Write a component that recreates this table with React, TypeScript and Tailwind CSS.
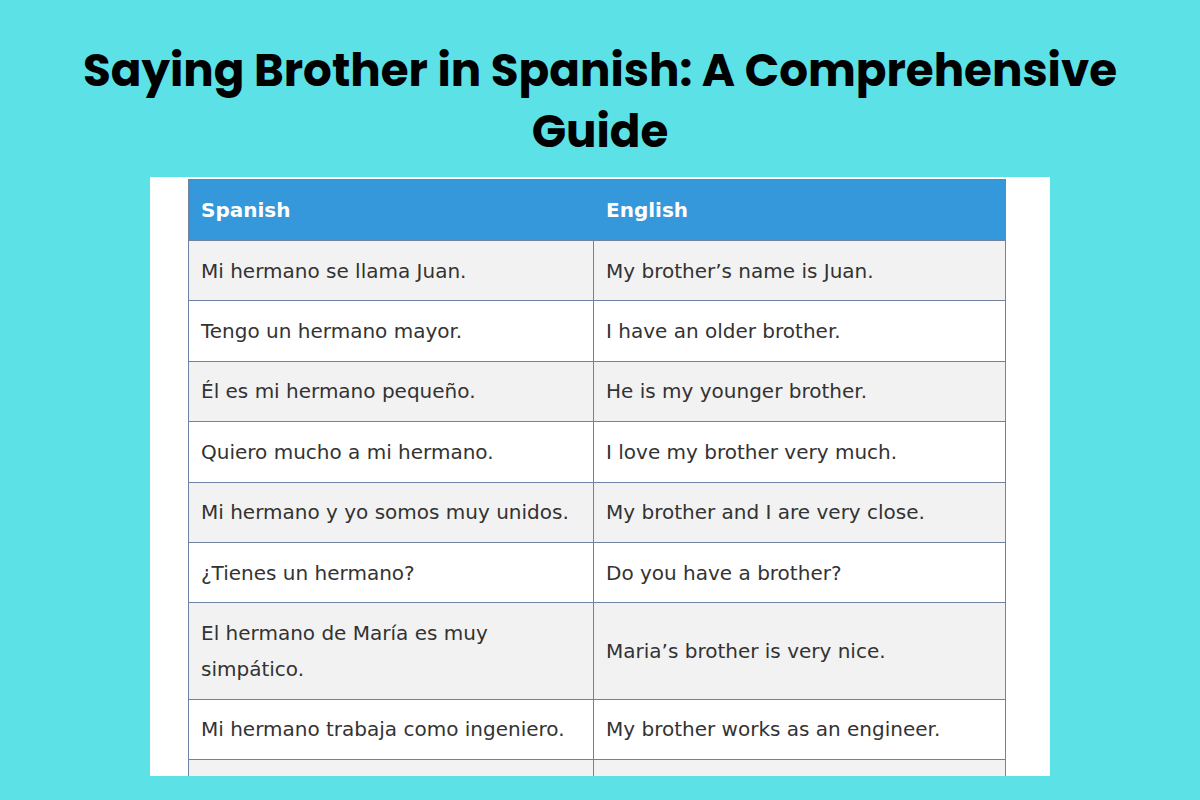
const rows: [string, string][] = [
  ["Mi hermano se llama Juan.", "My brother’s name is Juan."],
  ["Tengo un hermano mayor.", "I have an older brother."],
  ["Él es mi hermano pequeño.", "He is my younger brother."],
  ["Quiero mucho a mi hermano.", "I love my brother very much."],
  ["Mi hermano y yo somos muy unidos.", "My brother and I are very close."],
  ["¿Tienes un hermano?", "Do you have a brother?"],
  ["El hermano de María es muy simpático.", "Maria’s brother is very nice."],
  ["Mi hermano trabaja como ingeniero.", "My brother works as an engineer."],
  ["\u00a0", "\u00a0"],
];

export default function App() {
  return (
    <div className="flex h-[800px] w-[1200px] flex-col items-center overflow-hidden bg-[#5ce1e6]">
      <h1 className="mt-[40px] w-[1100px] text-center font-['Poppins','Inter',sans-serif] text-[45.2px] font-bold leading-[61px] text-black">
        Saying Brother in Spanish: A Comprehensive Guide
      </h1>
      <div className="mt-[15px] h-[599px] w-[900px] overflow-hidden bg-white pl-[38px] pt-[2px]">
        <table className="w-[818px] table-fixed border-collapse font-['DejaVu_Sans',sans-serif] text-[20px] text-[#333]">
          <thead>
            <tr className="h-[61px] bg-[#3498db] text-white">
              <th className="w-[405px] border border-[#7082a0] px-[12px] text-left font-bold">Spanish</th>
              <th className="border border-[#7082a0] px-[12px] text-left font-bold">English</th>
            </tr>
          </thead>
          <tbody>
            {rows.map(([es, en], i) => (
              <tr key={i} className={i % 2 === 0 ? "bg-[#f2f2f2]" : "bg-white"}>
                <td className="border border-[#7082a0] px-[12px] py-[11.7px] leading-[36px]">{es}</td>
                <td className="border border-[#7082a0] px-[12px] py-[11.7px] leading-[36px]">{en}</td>
              </tr>
            ))}
          </tbody>
        </table>
      </div>
    </div>
  );
}
